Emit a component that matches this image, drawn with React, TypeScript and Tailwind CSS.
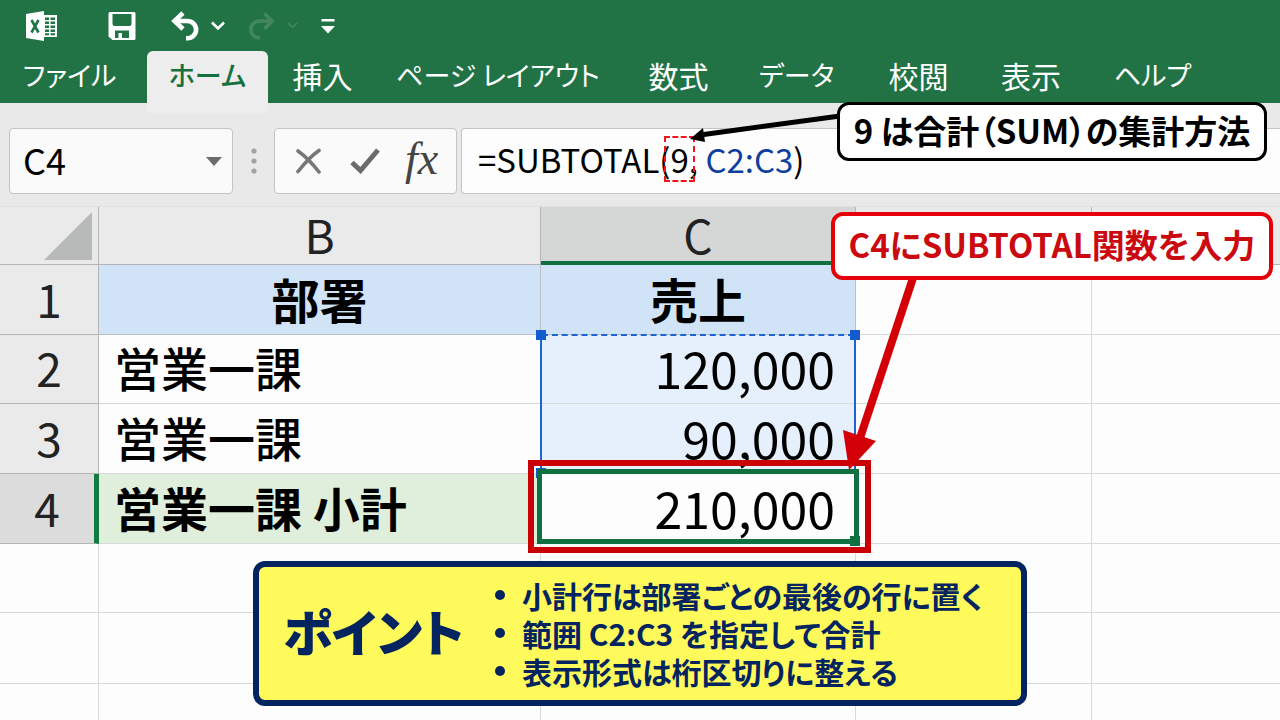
import React from "react";

const CJK = "font-['Noto_Sans_CJK_JP',sans-serif]";

const tabs: { label: string; width: string }[] = [
  { label: "挿入", width: "w-[109px] text-[30px]" },
  { label: "ページ レイアウト", width: "w-[242px] text-[27px]" },
  { label: "数式", width: "w-[119px] text-[30px]" },
  { label: "データ", width: "w-[117px] text-[27px]" },
  { label: "校閲", width: "w-[127px] text-[30px]" },
  { label: "表示", width: "w-[98px] text-[30px]" },
  { label: "ヘルプ", width: "w-[145px] text-[27px]" },
];

function QuickAccess() {
  return (
    <div className="flex h-[51px] items-center text-white">
      <svg className="ml-[25px] h-[32px] w-[34px]" viewBox="0 0 34 32" aria-label="Excel">
        <path d="M18 5h14v22H18z" fill="#fff" />
        <path d="M20 7.500h4v2.500h-4zM25.500 7.500h4.500v2.500h-4.500zM20 11.500h4v2.500h-4zM25.500 11.500h4.500v2.500h-4.500zM20 15.500h4v2.500h-4zM25.500 15.500h4.500v2.500h-4.500zM20 19.500h4v2.500h-4zM25.500 19.500h4.500v2.500h-4.500zM20 23.200h4v2h-4zM25.500 23.200h4.500v2h-4.500z" fill="#217346" />
        <path d="M1 4L19 1v30L1 28z" fill="#fff" />
        <path d="M6.500 10l7 12.500M13.500 10l-7 12.500" stroke="#217346" strokeWidth="2.600" fill="none" />
      </svg>
      <button aria-label="上書き保存" className="ml-[49px]">
        <svg className="h-[30px] w-[28px]" viewBox="0 0 28 30">
          <path fillRule="evenodd" d="M2 1h24q1.500 0 1.500 1.500v25q0 1.500-1.500 1.500H4.500L.5 25.500v-23Q.5 1 2 1zM4.500 3v10q0 2 2 2h15q2 0 2-2V3zM7 19.500v7.500h3.500V22h3.500v5h7v-7.500z" fill="currentColor" />
        </svg>
      </button>
      <button aria-label="元に戻す" className="ml-[35px] flex items-center gap-3">
        <svg className="h-[30px] w-[28px]" viewBox="0 0 28 30" fill="none" stroke="currentColor">
          <path d="M12 2L3.500 10l8.500 8" strokeWidth="4.600" />
          <path d="M4 10h12.500a8.600 8.600 0 0 1 0 17.200h-1.500" strokeWidth="4.600" />
        </svg>
        <svg className="h-[10px] w-[14px]" viewBox="0 0 14 10" fill="none" stroke="currentColor" strokeWidth="2.600">
          <path d="M1 1.500l6 6 6-6" />
        </svg>
      </button>
      <button aria-label="やり直し" className="ml-[23px] flex items-center gap-3 text-[#438660]">
        <svg className="h-[30px] w-[27px]" viewBox="0 0 28 30" fill="none" stroke="currentColor" strokeWidth="3.800">
          <path d="M17 2l8 8-8 8" />
          <path d="M25 10H11.500a8.600 8.600 0 0 0 0 17.200h1" />
        </svg>
        <svg className="h-[9px] w-[11px]" viewBox="0 0 14 10" fill="none" stroke="currentColor" strokeWidth="2">
          <path d="M1 1.500l6 6 6-6" />
        </svg>
      </button>
      <button aria-label="クイック アクセスのカスタマイズ" className="ml-[23px]">
        <svg className="h-[16px] w-[14px]" viewBox="0 0 14 16" fill="currentColor">
          <path d="M.5 1h13v2.500H.500zM0 8h14l-7 7.500z" />
        </svg>
      </button>
    </div>
  );
}

function Ribbon() {
  return (
    <header className="h-[103px] bg-[#217346]">
      <QuickAccess />
      <nav className="flex h-[52px] leading-[48px] text-white [font-feature-settings:'palt']">
        <button className="mr-2 w-[139px] shrink-0 whitespace-nowrap pb-1 text-[27px]">ファイル</button>
        <button className="h-[62px] w-[121px] shrink-0 self-start whitespace-nowrap rounded-t-md bg-[#ededed] pb-[14px] text-[27px] font-medium text-[#17703f]">
          ホーム
        </button>
        {tabs.map((t) => (
          <button key={t.label} className={`shrink-0 whitespace-nowrap pb-1 ${t.width}`}>
            {t.label}
          </button>
        ))}
      </nav>
    </header>
  );
}

function FormulaBar() {
  return (
    <div className="flex h-[104px] border-b border-[#dedede] bg-[#e9e9e9] pt-[25px]">
      <div className="ml-[9px] flex h-[66px] w-[224px] items-center justify-between rounded-sm border border-[#c4c4c4] bg-[#fafafa] pl-[13px] pr-[10px]">
        <input
          aria-label="名前ボックス"
          defaultValue="C4"
          className="mb-1 w-[120px] bg-transparent text-[36px] leading-[48px] text-black outline-none"
        />
        <button aria-label="セル名の一覧">
          <svg className="h-[9px] w-[16px]" viewBox="0 0 16 9" fill="#6b6b6b">
            <path d="M0 0h16L8 9z" />
          </svg>
        </button>
      </div>
      <svg className="ml-[18px] mt-[20px] h-[26px] w-[6px]" viewBox="0 0 6 26" fill="#a3a3a3">
        <circle cx="3" cy="3" r="2.600" />
        <circle cx="3" cy="13" r="2.600" />
        <circle cx="3" cy="23" r="2.600" />
      </svg>
      <div className="ml-[17px] flex h-[66px] w-[183px] items-center rounded-sm border border-[#c4c4c4] bg-[#fafafa]">
        <button aria-label="キャンセル" className="ml-[20px]">
          <svg className="h-[26px] w-[26px]" viewBox="0 0 26 26" fill="none" stroke="#777" strokeLinecap="round">
            <path d="M3 3C10 8 17 15 24 24" strokeWidth="3.600" />
            <path d="M24 2.500C16 8 9 16 3 23.500" strokeWidth="3.600" />
          </svg>
        </button>
        <button aria-label="入力" className="ml-[29px]">
          <svg className="h-[26px] w-[30px]" viewBox="0 0 30 26" fill="none" stroke="#6b6b6b" strokeWidth="5">
            <path d="M2 14.500l8.500 8L28 2" />
          </svg>
        </button>
        <button
          aria-label="関数の挿入"
          className="ml-[25px] pb-1 font-['Liberation_Serif',serif] text-[46px] italic leading-[48px] text-[#444]"
        >
          fx
        </button>
      </div>
      <div className="ml-[4px] flex h-[66px] min-w-0 flex-1 items-center rounded-l-sm border border-r-0 border-[#c4c4c4] bg-[#fdfdfd] pb-1 pl-[16px]">
        <div role="textbox" aria-label="数式バー" className="whitespace-nowrap text-[33px] leading-[48px] text-black">
          =SUBTOTAL(
          <span className="relative">
            9
            <span className="absolute -inset-x-[6px] inset-y-[1px] border-2 border-dashed border-[#f0141e]" />
          </span>
          , <span className="text-[#0f3f9c]">C2:C3</span>)
        </div>
      </div>
    </div>
  );
}

const line = "border-b border-r border-[#d9dadc] last:border-r-0";
const head =
  "border-b border-r border-[#b5b5b5] p-0 text-[46px] font-normal leading-[50px] text-[#222] last:border-r-0";

function RowHead({ n, active }: { n: number; active?: boolean }) {
  return (
    <th
      scope="row"
      className={`${head} pb-1 ${active ? "border-r-[5px] border-r-[#107c41] bg-[#dcdcdc]" : "bg-[#eaeaea]"}`}
    >
      {n}
    </th>
  );
}

function Sheet() {
  return (
    <table className="w-full table-fixed border-separate border-spacing-0 bg-[#fdfdfd] text-black">
      <colgroup>
        <col className="w-[99px]" />
        <col className="w-[442px]" />
        <col className="w-[315px]" />
        <col className="w-[236px]" />
        <col />
      </colgroup>
      <thead>
        <tr className="h-[58px]">
          <th className={`${head} bg-[#eaeaea]`}>
            <svg className="ml-[44px] h-[48px] w-[48px]" viewBox="0 0 48 48" fill="#b8b9b9" aria-label="すべて選択">
              <path d="M48 0v48H0z" />
            </svg>
          </th>
          <th className={`${head} bg-[#eaeaea] pb-1`}>B</th>
          <th className={`${head} border-b-4 border-b-[#107040] bg-[#d5d6d6] text-[#0e4f22]`}>C</th>
          <th className={`${head} bg-[#eaeaea]`} />
          <th className={`${head} bg-[#eaeaea]`} />
        </tr>
      </thead>
      <tbody className="text-[47px] leading-[60px]">
        <tr className="h-[70px]">
          <RowHead n={1} />
          <th className="border-b border-r border-[#b9bfc6] bg-[#d0e3f7] px-0 pb-1 pt-0 text-[48px] font-bold">部署</th>
          <th className="border-b border-r border-[#b9bfc6] bg-[#d0e3f7] px-0 pb-1 pt-0 text-[48px] font-bold">売上</th>
          <td className={line} />
          <td className={line} />
        </tr>
        <tr className="h-[69px]">
          <RowHead n={2} />
          <td className={`${line} pb-1 pl-[15px] pt-0 font-medium`}>営業一課</td>
          <td className={`${line} relative bg-[#e5f0fc] pb-1 pr-[20px] pt-0 text-right text-[50px]`}>
            120,000
            <span className="absolute -left-[1px] -top-[1px] h-[140px] w-[316px] border-2 border-[#1f63d2] border-t-transparent">
              <span className="absolute -top-[2px] left-0 w-full border-t-2 border-dashed border-[#1f63d2]" />
              <span className="absolute -left-[6px] -top-[6px] size-[10px] bg-[#155bd0]" />
              <span className="absolute -right-[6px] -top-[6px] size-[10px] bg-[#155bd0]" />
              <span className="absolute -bottom-[6px] -left-[6px] size-[10px] bg-[#155bd0]" />
            </span>
          </td>
          <td className={line} />
          <td className={line} />
        </tr>
        <tr className="h-[70px]">
          <RowHead n={3} />
          <td className={`${line} pb-1 pl-[15px] pt-0 font-medium`}>営業一課</td>
          <td className={`${line} bg-[#e5f0fc] pb-1 pr-[20px] pt-0 text-right text-[50px]`}>90,000</td>
          <td className={line} />
          <td className={line} />
        </tr>
        <tr className="h-[70px]">
          <RowHead n={4} active />
          <td className={`${line} bg-[#e0efdc] pb-1 pl-[15px] pt-0 font-bold`}>営業一課 小計</td>
          <td className={`${line} relative pb-1 pr-[20px] pt-0 text-right text-[50px]`}>
            <span className="absolute -inset-x-[4px] -bottom-[1px] -top-[5px] border-[5px] border-[#0f7040] bg-[#fdfdfd]">
              <span className="absolute -bottom-[7px] -right-[6px] size-[10px] bg-[#0f7040]" />
            </span>
            <span className="absolute -bottom-[10px] -left-[13px] -right-[16px] -top-[14px] border-[6px] border-[#cb0005]" />
            <span className="relative">210,000</span>
          </td>
          <td className={line} />
          <td className={line} />
        </tr>
        {["h-[69px]", "h-[71px]", "h-[70px]"].map((h) => (
          <tr key={h} className={h}>
            <td className={line} />
            <td className={line} />
            <td className={line} />
            <td className={line} />
            <td className={line} />
          </tr>
        ))}
      </tbody>
    </table>
  );
}

function Arrows() {
  return (
    <svg className="pointer-events-none absolute left-0 top-0 h-[720px] w-[1280px]" viewBox="0 0 1280 720">
      <path d="M840 116L700 135" stroke="#000" strokeWidth="5" />
      <path d="M690 139l13-11 2 14z" fill="#000" />
      <path d="M913 278L860 438" stroke="#d40007" strokeWidth="8" />
      <path d="M843 430l33 11-27 29z" fill="#d40007" />
    </svg>
  );
}

export default function App() {
  return (
    <div className={`relative h-screen overflow-hidden bg-[#fdfdfd] ${CJK}`}>
      <Ribbon />
      <FormulaBar />
      <Sheet />
      <Arrows />
      <aside className="absolute left-[837px] top-[102px] flex h-[59px] w-[430px] items-center justify-center whitespace-nowrap rounded-xl border-[3px] border-black bg-white pb-1 text-[33px] font-bold leading-[48px] text-black [font-feature-settings:'palt']">
        9 は合計（SUM）の集計方法
      </aside>
      <aside className="absolute left-[831px] top-[212px] flex h-[68px] w-[442px] items-center justify-center whitespace-nowrap rounded-xl border-4 border-[#e6000a] bg-white pb-1 text-[33px] font-bold leading-[48px] text-[#cb0a10] [font-feature-settings:'palt']">
        C4にSUBTOTAL関数を入力
      </aside>
      <section className="absolute left-[253px] top-[561px] flex h-[145px] w-[774px] items-center rounded-xl border-[6px] border-[#03245f] bg-[#fffa5c] text-[#03245f] [font-feature-settings:'palt']">
        <h2 className="ml-[24px] w-[182px] whitespace-nowrap pb-2 text-[50px] font-black leading-[60px]">ポイント</h2>
        <ul className="ml-[30px] pb-[2px] text-[30px] font-bold leading-[38px]">
          {["小計行は部署ごとの最後の行に置く", "範囲 C2:C3 を指定して合計", "表示形式は桁区切りに整える"].map((s) => (
            <li key={s} className="flex items-center gap-[17px] whitespace-nowrap">
              <span className="size-[10px] rounded-full bg-[#03245f]" />
              {s}
            </li>
          ))}
        </ul>
      </section>
    </div>
  );
}
